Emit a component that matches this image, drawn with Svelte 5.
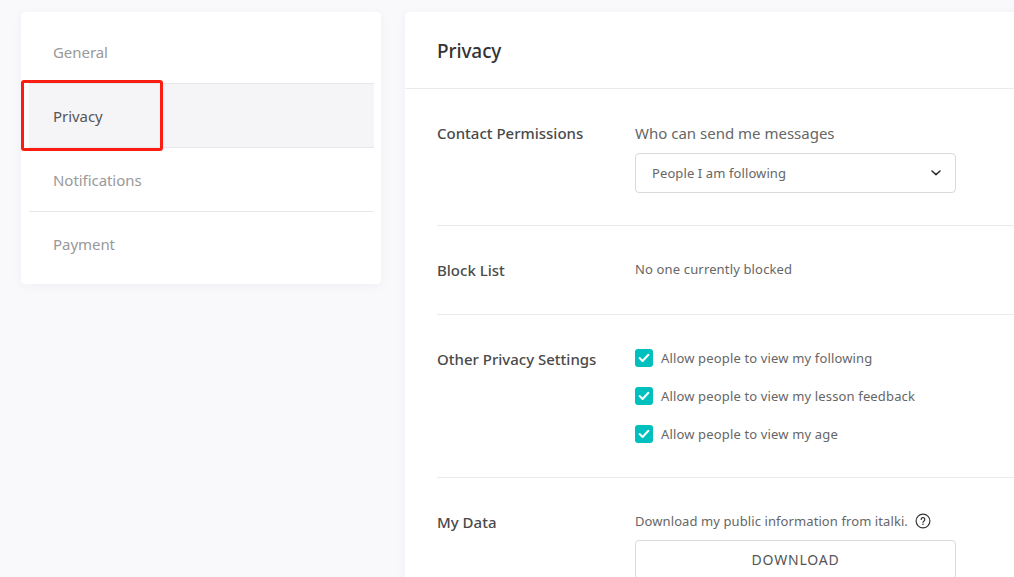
<script lang="ts">
  const tabs = ['General', 'Privacy', 'Notifications', 'Payment'];
  const active = 'Privacy';
  const privacyOptions = [
    'Allow people to view my following',
    'Allow people to view my lesson feedback',
    'Allow people to view my age',
  ];
</script>

<div class="page">
  <nav class="sidebar">
    <div class="tabs">
      {#each tabs as tab}
        <div class="tab" class:active={tab === active}>{tab}</div>
      {/each}
    </div>
    <div class="highlight"></div>
  </nav>

  <main class="panel">
    <h1>Privacy</h1>
    <div class="sections">
      <section class="contact">
        <h2>Contact Permissions</h2>
        <div class="body">
          <p class="question">Who can send me messages</p>
          <div class="select">
            <span>People I am following</span>
            <svg width="10" height="6" viewBox="0 0 10 6" fill="none">
              <path d="M1 1l4 3.6L9 1" stroke="#333" stroke-width="1.6" stroke-linecap="round" stroke-linejoin="round" />
            </svg>
          </div>
        </div>
      </section>

      <section class="block">
        <h2>Block List</h2>
        <div class="body"><p class="small">No one currently blocked</p></div>
      </section>

      <section class="other">
        <h2>Other Privacy Settings</h2>
        <div class="body options">
          {#each privacyOptions as option}
            <div class="option">
              <span class="check">
                <svg width="12" height="10" viewBox="0 0 12 10" fill="none">
                  <path d="M1.6 5l3 3 5.8-6.2" stroke="#fff" stroke-width="2" stroke-linecap="round" stroke-linejoin="round" />
                </svg>
              </span>
              <span class="small">{option}</span>
            </div>
          {/each}
        </div>
      </section>

      <section class="data">
        <h2>My Data</h2>
        <div class="body">
          <p class="small info">
            Download my public information from italki.
            <svg width="16" height="16" viewBox="0 0 16 16" fill="none">
              <circle cx="8" cy="8" r="6.9" stroke="#333" stroke-width="1.2" />
              <path d="M6.2 6.4a1.8 1.8 0 1 1 2.8 1.5c-.6.4-1 .7-1 1.4" stroke="#333" stroke-width="1.2" stroke-linecap="round" />
              <circle cx="8" cy="11.2" r=".8" fill="#333" />
            </svg>
          </p>
          <div class="download">DOWNLOAD</div>
        </div>
      </section>
    </div>
  </main>
</div>

<style>
  :global(body) {
    margin: 0;
    background: #f9f9fc;
    overflow: hidden;
  }
  .page {
    display: flex;
    align-items: flex-start;
    gap: 24px;
    height: 577px;
    padding: 12px 0 0 21px;
    box-sizing: border-box;
    overflow: hidden;
    font-family: 'Noto Sans', 'Open Sans', sans-serif;
    color: #333;
  }
  .sidebar {
    position: relative;
    flex: none;
    width: 360px;
    height: 272px;
    box-sizing: border-box;
    padding: 8px 7px 8px 8px;
    background: #fff;
    border-radius: 4px;
    box-shadow: 0 2px 12px rgba(30, 30, 70, 0.04);
  }
  .tab {
    height: 64px;
    box-sizing: border-box;
    padding-left: 24px;
    line-height: 64px;
    font-size: 15px;
    letter-spacing: -0.05px;
    color: #999;
    border-bottom: 1px solid #e8e8ec;
  }
  .tab:last-child {
    border-bottom: 0;
  }
  .tab.active {
    background: #f5f5f7;
    color: #555;
  }
  .highlight {
    position: absolute;
    left: 0;
    top: 68px;
    width: 142px;
    height: 71px;
    box-sizing: border-box;
    border: 3px solid #fa1e12;
    border-radius: 3px;
  }
  .panel {
    flex: none;
    width: 660px;
    height: 640px;
    background: #fff;
    border-radius: 4px 4px 0 0;
    box-shadow: 0 2px 12px rgba(30, 30, 70, 0.04);
  }
  h1 {
    margin: 0;
    height: 76px;
    padding-left: 32px;
    line-height: 78px;
    font-size: 19px;
    letter-spacing: -0.1px;
    font-weight: 500;
    color: #333;
    border-bottom: 1px solid #ebebeb;
  }
  .sections {
    padding-left: 32px;
  }
  section {
    display: grid;
    grid-template-columns: 198px 1fr;
    border-bottom: 1px solid #ebebeb;
    box-sizing: border-box;
  }
  section:last-child {
    border-bottom: 0;
  }
  .contact {
    height: 137px;
    padding-top: 32px;
  }
  .block {
    height: 89px;
    padding-top: 32px;
  }
  .other {
    height: 163px;
    padding-top: 32px;
  }
  .data {
    padding-top: 32px;
  }
  h2 {
    margin: 0;
    font-size: 15px;
    line-height: 24px;
    font-weight: 500;
    color: #4a4a4a;
  }
  p {
    margin: 0;
  }
  .question {
    font-size: 15px;
    line-height: 24px;
    color: #666;
  }
  .small {
    font-size: 13px;
    letter-spacing: 0.15px;
    line-height: 22px;
    color: #666;
  }
  .select {
    display: flex;
    align-items: center;
    justify-content: space-between;
    width: 321px;
    height: 40px;
    margin-top: 8px;
    padding: 0 14px 0 16px;
    box-sizing: border-box;
    border: 1px solid #d9d9d9;
    border-radius: 4px;
    font-size: 13px;
    letter-spacing: 0.1px;
    color: #666;
  }
  .options {
    display: flex;
    flex-direction: column;
    gap: 16px;
  }
  .option {
    display: flex;
    align-items: center;
    gap: 8px;
    height: 22px;
  }
  .check {
    display: flex;
    align-items: center;
    justify-content: center;
    width: 18px;
    height: 18px;
    border-radius: 3px;
    background: #00c0bd;
  }
  .info {
    display: flex;
    align-items: center;
    gap: 7px;
    letter-spacing: 0.09px;
  }
  .download {
    width: 321px;
    height: 40px;
    margin-top: 8px;
    box-sizing: border-box;
    border: 1px solid #d9d9d9;
    border-radius: 4px;
    text-align: center;
    line-height: 38px;
    font-size: 14px;
    letter-spacing: 0.8px;
    color: #555;
  }
</style>
